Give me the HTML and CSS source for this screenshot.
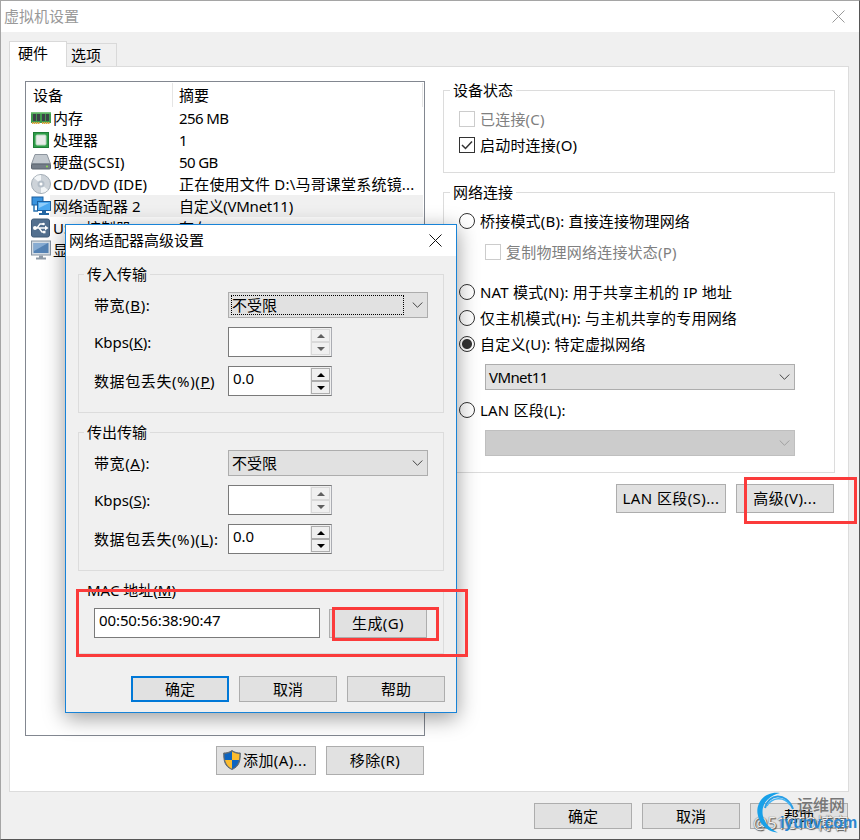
FILE: index.html
```
<!DOCTYPE html>
<html lang="zh-CN">
<head>
    <meta charset="UTF-8">
    <meta name="viewport" content="width=device-width, initial-scale=1.0">
    <title>虚拟机设置</title>
    <link rel="stylesheet" href="styles.css">
</head>
<body>
    <div class="window">
        <header class="titlebar">
            <span>虚拟机设置</span>
            <svg class="close" width="13" height="13" viewBox="0 0 13 13"><path d="M.5.5l12 12M12.5.5l-12 12" stroke="#999" fill="none"/></svg>
        </header>

        <nav class="tabs">
            <div class="tab active">硬件</div>
            <div class="tab">选项</div>
        </nav>

        <main class="page">
            <section class="left">
                <div class="device-list">
                    <div class="list-head"><span class="col-name">设备</span><span class="col-info">摘要</span></div>
                    <div class="row">
                        <svg width="20" height="16" viewBox="0 0 20 16">
                            <rect x="0" y="2" width="20" height="11" fill="#3f9a4b"/><rect x="0" y="2" width="20" height="1.5" fill="#7cc47f"/>
                            <path d="M2 4h3v7H2zM6 4h3v7H6zM11 4h3v7h-3zM15 4h3v7h-3z" fill="#3b4347"/>
                            <path d="M1 13h8M11 13h8" stroke="#d9a441" stroke-width="2" stroke-dasharray="1.5 .5"/>
                        </svg>
                        <span class="col-name">内存</span><span class="col-info latin">256 MB</span>
                    </div>
                    <div class="row">
                        <svg width="20" height="16" viewBox="0 0 20 16">
                            <rect x="2.5" y=".5" width="15" height="15" fill="#2f9e49" stroke="#1f7d37"/>
                            <rect x="5" y="3" width="10" height="10" rx="1" fill="#e9ecea" stroke="#b9d8bf"/>
                        </svg>
                        <span class="col-name">处理器</span><span class="col-info latin">1</span>
                    </div>
                    <div class="row">
                        <svg width="20" height="16" viewBox="0 0 20 16">
                            <path d="M4 .5h12l3.500 9.500H.5z" fill="#c3c9cf" stroke="#8d959e"/>
                            <rect x=".5" y="10" width="19" height="5" rx="1" fill="#747d88" stroke="#5b646e"/>
                            <circle cx="16" cy="12.500" r="1" fill="#8fe04e"/>
                        </svg>
                        <span class="col-name wide">硬盘(SCSI)</span><span class="col-info latin">50 GB</span>
                    </div>
                    <div class="row">
                        <svg width="20" height="20" viewBox="0 0 20 20">
                            <circle cx="10" cy="10" r="9.500" fill="#cdd3d9" stroke="#a3adb6"/>
                            <path d="M10 10L3 4a9 9 0 0 1 7-3zM10 10l7 6a9 9 0 0 1-7 3z" fill="#f2f5f7"/>
                            <circle cx="10" cy="10" r="3.500" fill="#b4bec8"/><circle cx="10" cy="10" r="1.500" fill="#fff"/>
                        </svg>
                        <span class="col-name">CD/DVD (IDE)</span><span class="col-info wide">正在使用文件 D:\马哥课堂系统镜...</span>
                    </div>
                    <div class="row selected">
                        <svg width="20" height="20" viewBox="0 0 20 20">
                            <rect x="1" y="1" width="11" height="8" fill="#3a93de" stroke="#1d5f9e"/>
                            <path d="M3 9v6h4" stroke="#2b74b3" stroke-width="1.500" fill="none"/>
                            <rect x="6.500" y="5.500" width="13" height="9" fill="#4aa8f0" stroke="#1d5f9e"/>
                            <path d="M8 7h10l-10 5z" fill="#8fcdfa"/>
                            <path d="M11 15h4v2h3v2H8v-2h3z" fill="#2567a3"/>
                        </svg>
                        <span class="col-name">网络适配器 2</span><span class="col-info narrow">自定义(VMnet11)</span>
                    </div>
                    <div class="row">
                        <svg width="20" height="20" viewBox="0 0 20 20">
                            <rect x=".5" y="1" width="18" height="18" rx="2" fill="#53708f" stroke="#3f5a77"/>
                            <path d="M3 10h13M6 10l3-4h3M8 10l3 4h2" stroke="#fff" stroke-width="1.300" fill="none"/>
                            <circle cx="4" cy="10" r="2" fill="#fff"/><path d="M14 7.500l3.500 2.500-3.500 2.500z" fill="#fff"/>
                            <circle cx="12.500" cy="6" r="1.300" fill="#fff"/><rect x="12" y="12.800" width="2.500" height="2.500" fill="#fff"/>
                        </svg>
                        <span class="col-name">USB 控制器</span><span class="col-info">存在</span>
                    </div>
                    <div class="row">
                        <svg width="20" height="20" viewBox="0 0 20 20">
                            <rect x=".5" y="1" width="19" height="14" fill="#d5dde5" stroke="#8693a1"/>
                            <rect x="2.500" y="3" width="15" height="10" fill="#5583b5"/>
                            <path d="M3 3h14L3 11z" fill="#86abd2"/>
                            <path d="M8 15.500h4v2h3v2H5v-2h3z" fill="#8d99a6"/>
                        </svg>
                        <span class="col-name">显示器</span><span class="col-info">自动检测</span>
                    </div>
                </div>
                <div class="actions">
                    <button class="btn add">
                        <svg width="18" height="20" viewBox="0 0 18 20">
                            <path d="M9 .5C6.500 2.500 3.500 3 .7 3c0 8 1 13.500 8.300 16.500C16.300 16.500 17.300 11 17.300 3 14.500 3 11.500 2.500 9 .5z" fill="#5e6a75" stroke="#5e6a75"/>
                            <path d="M9 1.500C7 3 4.500 3.700 1.600 3.900c0 2.400.1 4.300.5 6.100H9z" fill="#0d64c0"/>
                            <path d="M9 1.500c2 1.500 4.500 2.200 7.400 2.400 0 2.400-.1 4.300-.5 6.100H9z" fill="#fcbc2e"/>
                            <path d="M9 10H2.100c.9 4 2.900 6.900 6.900 8.700z" fill="#fcbc2e"/>
                            <path d="M9 10h6.900c-.9 4-2.900 6.900-6.900 8.700z" fill="#0d64c0"/>
                        </svg><span>添加(A)...</span>
                    </button>
                    <button class="btn">移除(R)</button>
                </div>
            </section>

            <section class="right">
                <fieldset class="status">
                    <legend>设备状态</legend>
                    <div class="option disabled"><i class="check"></i>已连接(C)</div>
                    <div class="option"><i class="check"><svg width="14" height="14" viewBox="0 0 14 14"><path d="M2 7l3.500 3.500L12 3.500" fill="none" stroke="#333" stroke-width="1.500"/></svg></i>启动时连接(O)</div>
                </fieldset>
                <fieldset class="network">
                    <legend>网络连接</legend>
                    <div class="option"><i class="radio"></i>桥接模式(B): 直接连接物理网络</div>
                    <div class="option disabled sub"><i class="check"></i>复制物理网络连接状态(P)</div>
                    <div class="option"><i class="radio"></i>NAT 模式(N): 用于共享主机的 IP 地址</div>
                    <div class="option"><i class="radio"></i>仅主机模式(H): 与主机共享的专用网络</div>
                    <div class="option"><i class="radio on"></i>自定义(U): 特定虚拟网络</div>
                    <div class="select"><span class="latin">VMnet11</span><svg width="11" height="6" viewBox="0 0 11 6"><path d="M.7.5l4.800 4.800L10.300.5"/></svg></div>
                    <div class="option"><i class="radio"></i>LAN 区段(L):</div>
                    <div class="select off"><span></span><svg width="11" height="6" viewBox="0 0 11 6"><path d="M.7.5l4.800 4.800L10.300.5"/></svg></div>
                </fieldset>
                <div class="actions">
                    <button class="btn lan">LAN 区段(S)...</button>
                    <button class="btn">高级(V)...</button>
                </div>
            </section>
        </main>

        <footer class="footer">
            <button class="btn">确定</button>
            <button class="btn">取消</button>
            <button class="btn">帮助</button>
        </footer>
    </div>

    <div class="dialog">
        <header class="titlebar">
            <span>网络适配器高级设置</span>
            <svg class="close" width="13" height="13" viewBox="0 0 13 13"><path d="M.5.5l12 12M12.500.5l-12 12" stroke="#111" fill="none"/></svg>
        </header>
        <div class="dialog-body">
            <fieldset class="transfer">
                <legend>传入传输</legend>
                <div class="field band"><label>带宽(<u>B</u>):</label><div class="select focus"><span>不受限</span><svg width="11" height="6" viewBox="0 0 11 6"><path d="M.7.5l4.800 4.800L10.300.5"/></svg></div></div>
                <div class="field kbps"><label>Kbps(<u>K</u>):</label><div class="spin off"><span></span><i class="arrows"><b class="up"></b><b class="down"></b></i></div></div>
                <div class="field"><label>数据包丢失(%)(<u>P</u>)</label><div class="spin"><span>0.0</span><i class="arrows"><b class="up"></b><b class="down"></b></i></div></div>
            </fieldset>
            <fieldset class="transfer">
                <legend>传出传输</legend>
                <div class="field band"><label>带宽(<u>A</u>):</label><div class="select"><span>不受限</span><svg width="11" height="6" viewBox="0 0 11 6"><path d="M.7.5l4.800 4.800L10.300.5"/></svg></div></div>
                <div class="field kbps"><label>Kbps(<u>S</u>):</label><div class="spin off"><span></span><i class="arrows"><b class="up"></b><b class="down"></b></i></div></div>
                <div class="field"><label>数据包丢失(%)(<u>L</u>):</label><div class="spin"><span>0.0</span><i class="arrows"><b class="up"></b><b class="down"></b></i></div></div>
            </fieldset>
            <fieldset class="mac">
                <legend>MAC 地址(<u>M</u>)</legend>
                <div class="mac-row"><div class="mac-input">00:50:56:38:90:47</div><button class="btn">生成(G)</button></div>
            </fieldset>
            <div class="dialog-buttons">
                <button class="btn primary">确定</button>
                <button class="btn">取消</button>
                <button class="btn">帮助</button>
            </div>
        </div>
    </div>

    <!-- 红框标注 -->
    <div class="mark mark-advanced"></div>
    <div class="mark mark-mac"></div>
    <div class="mark mark-generate"></div>

    <!-- 水印 -->
    <div class="watermark">
        <span class="blog">@51CTO博客</span>
        <svg width="40" height="44" viewBox="0 0 40 44">
            <path d="M24 1C9-1 0 10 1.500 21.500 3 32 11 39.500 22 40.500 13 37 6.500 29 6.500 20 6.500 10 14 3.500 24 1z" fill="#18a0e8"/>
            <path d="M9 16C12 2 30-1 37 17" stroke="#2a9fe6" stroke-width="2" fill="none"/>
            <path d="M11 14C16 5 28 4 34 13" stroke="#45b5f3" stroke-width="1.500" fill="none"/>
        </svg>
        <span class="brand">运维网</span>
        <span class="site">iyunv.com</span>
    </div>
</body>
</html>
```
FILE: styles.css
```
* {
    margin: 0;
    padding: 0;
    box-sizing: border-box;
}

body {
    width: 860px;
    height: 840px;
    overflow: hidden;
    position: relative;
    font-family: "Noto Sans", "Noto Sans CJK SC", sans-serif;
    font-size: 15px;
    line-height: 20px;
    color: #000;
    white-space: nowrap;
}

.window {
    height: 840px;
    display: flex;
    flex-direction: column;
    background-color: #f0f0f0;
    border: 1px solid #a5a5a5;
    border-right-color: #555;
    border-bottom-color: #555;
}

.titlebar {
    display: flex;
    justify-content: space-between;
    align-items: center;
    height: 31px;
    padding: 0 14px 0 3px;
    background-color: #fff;
    color: #999;
}

.titlebar span {
    padding-bottom: 2px;
}

.titlebar svg {
    margin-bottom: 1px;
}

.tabs {
    display: flex;
    align-items: flex-end;
    height: 34px;
    padding-left: 8px;
}

.tab {
    width: 50px;
    height: 23px;
    padding: 1px 0 0 4px;
    border: 1px solid #d9d9d9;
    border-left: none;
    border-bottom: none;
}

.tab.active {
    width: 58px;
    height: 26px;
    padding-left: 8px;
    margin-bottom: -1px;
    background-color: #fff;
    border-left: 1px solid #d9d9d9;
    z-index: 1;
}

.page {
    display: flex;
    height: 726px;
    margin: 0 10px 0 8px;
    padding: 14px 13px 0 15px;
    background-color: #fff;
    border: 1px solid #dcdcdc;
}

.left {
    width: 400px;
    margin-right: 18px;
}

.device-list {
    height: 655px;
    padding: 1px;
    border: 1px solid #828790;
}

.list-head {
    display: flex;
    align-items: center;
    height: 24px;
    padding-left: 6px;
    border-right: 1px solid #e5e5e5;
}

.list-head .col-name {
    width: 140px;
    height: 24px;
    padding-top: 2px;
    border-right: 1px solid #e5e5e5;
}

.list-head .col-info {
    padding-left: 6px;
}

.row {
    display: flex;
    align-items: center;
    height: 22px;
    padding-left: 4px;
}

.row.selected {
    background: linear-gradient(90deg, #fff 23px, #f0f0f0 23px);
}

.row .col-name {
    width: 126px;
    padding-left: 2px;
}

.row .col-info {
    padding-left: 2px;
}

.latin {
    letter-spacing: -0.6px;
}

.narrow {
    letter-spacing: -0.25px;
}

.wide {
    letter-spacing: 0.2px;
}

.actions {
    display: flex;
    justify-content: flex-end;
    gap: 10px;
    margin-top: 10px;
}

.left .actions {
    padding-right: 1px;
}

.btn {
    width: 98px;
    height: 29px;
    padding-bottom: 1px;
    font: inherit;
    letter-spacing: 0.4px;
    color: #000;
    background-color: #e1e1e1;
    border: 1px solid #adadad;
}

.btn.add {
    display: flex;
    align-items: center;
    width: 100px;
    padding-left: 6px;
    gap: 2px;
}

.btn.lan {
    width: 110px;
}

.right {
    width: 392px;
    flex: none;
    margin-top: -1px;
}

fieldset {
    border: 1px solid #dcdcdc;
    padding: 0 6px;
}

legend {
    height: 20px;
    padding: 0 3px;
}

.status {
    height: 93px;
    margin-bottom: 9px;
}

.status legend, .network legend {
    margin-bottom: 6px;
}

.network {
    height: 291px;
}

.option {
    display: flex;
    align-items: center;
    gap: 5px;
    height: 26px;
    padding-left: 9px;
    letter-spacing: 0.2px;
}

.option.disabled {
    color: #808080;
}

.option.sub {
    margin: 5px 0 14px 26px;
}

.check, .radio {
    width: 16px;
    height: 16px;
    border: 1px solid #333;
    background-color: #fff;
    flex: none;
}

.check svg {
    display: block;
}

.disabled .check {
    border-color: #ccc;
}

.radio {
    border-radius: 50%;
}

.radio.on {
    background: radial-gradient(circle, #333 4.5px, #fff 5.5px);
}

.select {
    display: flex;
    align-items: center;
    justify-content: space-between;
    width: 200px;
    height: 26px;
    padding: 0 4px 0 3px;
    background-color: #e1e1e1;
    border: 1px solid #adadad;
}

.select svg {
    fill: none;
    stroke: #444;
}

.network .select {
    width: 310px;
    margin: 7px 0 7px 35px;
}

.select.off {
    background-color: #ccc;
    border-color: #bfbfbf;
}

.select.off svg {
    stroke: #a0a0a0;
}

.select.focus {
    padding-left: 2px;
}

.select.focus span {
    width: 173px;
    line-height: 18px;
    border: 1px dotted #000;
}

.right .actions {
    margin-top: 11px;
    padding-right: 1px;
}

.footer {
    display: flex;
    justify-content: flex-end;
    gap: 10px;
    padding: 11px 11px 0 0;
}

.footer .btn, .dialog-buttons .btn {
    height: 26px;
    letter-spacing: 0;
}

/* 高级设置对话框 */
.dialog {
    position: absolute;
    left: 65px;
    top: 224px;
    width: 392px;
    height: 489px;
    background-color: #f0f0f0;
    border: 1px solid #1883d7;
    box-shadow: 0 5px 20px rgba(0, 0, 0, 0.4);
}

.dialog .titlebar {
    color: #000;
}

.dialog-body {
    padding: 8px 12px 0 12px;
}

.transfer {
    height: 149px;
    margin-bottom: 9px;
    padding-left: 15px;
}

.transfer legend, .mac legend {
    margin-left: -10px;
}

.field {
    display: flex;
    align-items: center;
    height: 30px;
    margin-bottom: 9px;
}

.field label {
    width: 134px;
    letter-spacing: 0.6px;
}

.field.kbps label {
    letter-spacing: 0;
}

.field.band {
    height: 26px;
    margin-top: 8px;
}

.spin {
    display: flex;
    width: 104px;
    height: 30px;
    background-color: #fff;
    border: 1px solid #7a7a7a;
    border-right-color: #abadb3;
}

.spin span {
    width: 81px;
    padding: 1px 0 0 4px;
}

.arrows {
    display: flex;
    flex-direction: column;
    width: 21px;
    padding: 1px;
    background-color: #f0f0f0;
}

.arrows b {
    display: flex;
    align-items: center;
    justify-content: center;
    height: 13px;
    border: 1px solid #adadad;
}

.arrows b::after {
    content: "";
    border: 4px solid transparent;
}

.arrows .up::after {
    border-bottom-color: #000;
    border-top-width: 0;
}

.arrows .down::after {
    border-top-color: #000;
    border-bottom-width: 0;
}

.off .arrows b {
    border-color: #d9d9d9;
}

.off .arrows b::after {
    opacity: 0.6;
}

.mac {
    height: 74px;
    padding-left: 15px;
}

.mac-row {
    display: flex;
    gap: 9px;
    margin-top: 8px;
}

.mac-input {
    width: 226px;
    height: 30px;
    padding: 1px 4px;
    letter-spacing: -0.1px;
    background-color: #fff;
    border: 1px solid #7a7a7a;
}

.mac-row .btn {
    margin-top: 1px;
}

.dialog-buttons {
    display: flex;
    justify-content: flex-end;
    gap: 10px;
    margin-top: 22px;
    margin-right: -1px;
}

.btn.primary {
    border: 2px solid #0078d7;
}

.mark {
    position: absolute;
    border: 3px solid #fb3b3b;
}

.mark-advanced {
    left: 744px;
    top: 477px;
    width: 113px;
    height: 47px;
}

.mark-mac {
    left: 76px;
    top: 589px;
    width: 392px;
    height: 68px;
}

.mark-generate {
    left: 332px;
    top: 607px;
    width: 107px;
    height: 34px;
}

.watermark {
    position: absolute;
    left: 752px;
    top: 792px;
    width: 108px;
    height: 44px;
}

.watermark > * {
    position: absolute;
}

.watermark svg {
    left: 4px;
    top: 0;
}

.blog {
    left: 1px;
    top: 21px;
    font-size: 16px;
    color: #eee;
    text-shadow: 0 0 1px #333, 1px 1px 1px #555;
}

.brand {
    left: 45px;
    top: 3px;
    font-size: 16px;
    font-weight: 500;
    color: #777;
}

.site {
    left: 28px;
    top: 21px;
    font-family: "Liberation Sans", sans-serif;
    font-size: 16px;
    font-weight: bold;
    letter-spacing: -0.1px;
    color: #2b86cf;
}
```
